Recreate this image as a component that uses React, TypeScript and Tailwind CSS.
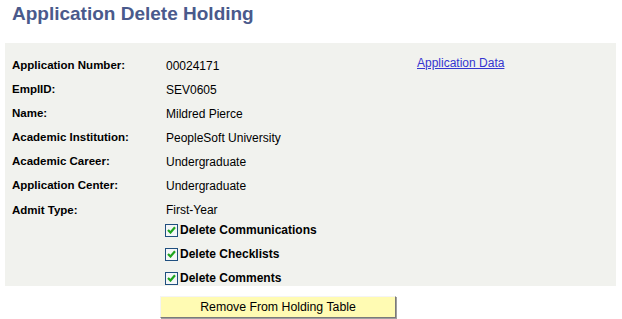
import React from "react";

const rows: [string, string][] = [
  ["Application Number:", "00024171"],
  ["EmplID:", "SEV0605"],
  ["Name:", "Mildred Pierce"],
  ["Academic Institution:", "PeopleSoft University"],
  ["Academic Career:", "Undergraduate"],
  ["Application Center:", "Undergraduate"],
];

function Check({ label }: { label: string }) {
  return (
    <div className="flex h-[24px] items-center pl-[160px]">
      <span className="flex h-[13px] w-[13px] items-center justify-center border border-[#1f4f7f] bg-[#f4f6f8]">
        <svg width="9" height="8" viewBox="0 0 9 8">
          <path d="M1 4 L3.5 6.5 L8 1.2" stroke="#1ea51e" strokeWidth="2.2" fill="none" />
        </svg>
      </span>
      <span className="ml-[2px] text-[12px] font-bold text-black">{label}</span>
    </div>
  );
}

export default function App() {
  return (
    <div className="h-[319px] w-[622px] bg-white" style={{ fontFamily: '"Liberation Sans", Arial, sans-serif' }}>
      <div className="pl-[12px] pt-[3px] text-[19px] font-bold leading-[22px] text-[#4a5a8c]">
        Application Delete Holding
      </div>
      <div className="ml-[5px] mt-[18px] h-[243px] w-[611px] bg-[#f1f2ee] pt-[11px]">
        {rows.map(([l, v], i) => (
          <div key={l} className="flex h-[24px] items-center">
            <div className="w-[161px] pl-[7px] text-[11.5px] font-bold text-black">{l}</div>
            <div className="w-[251px] text-[12px] text-black">{v}</div>
            {i === 0 && (
              <a href="#" className="mt-[2px] self-start text-[12px] leading-[14px] text-[#3535d0] underline">
                Application Data
              </a>
            )}
          </div>
        ))}
        <div className="flex h-[20px] items-start">
          <div className="w-[161px] pl-[7px] text-[11.5px] font-bold leading-[24px] text-black">Admit Type:</div>
          <div className="text-[12px] leading-[24px] text-black">First-Year</div>
        </div>
        <Check label="Delete Communications" />
        <Check label="Delete Checklists" />
        <Check label="Delete Comments" />
      </div>
      <div className="ml-[160px] mt-[8px]">
        <button className="h-[22px] w-[236px] border border-t-[#f4f4f4] border-l-[#f4f4f4] border-b-[#7a7a7a] border-r-[#7a7a7a] bg-[#fffbb3] text-[12.3px] text-black shadow-[1px_1px_0_#a0a0a0]">
          Remove From Holding Table
        </button>
      </div>
    </div>
  );
}
